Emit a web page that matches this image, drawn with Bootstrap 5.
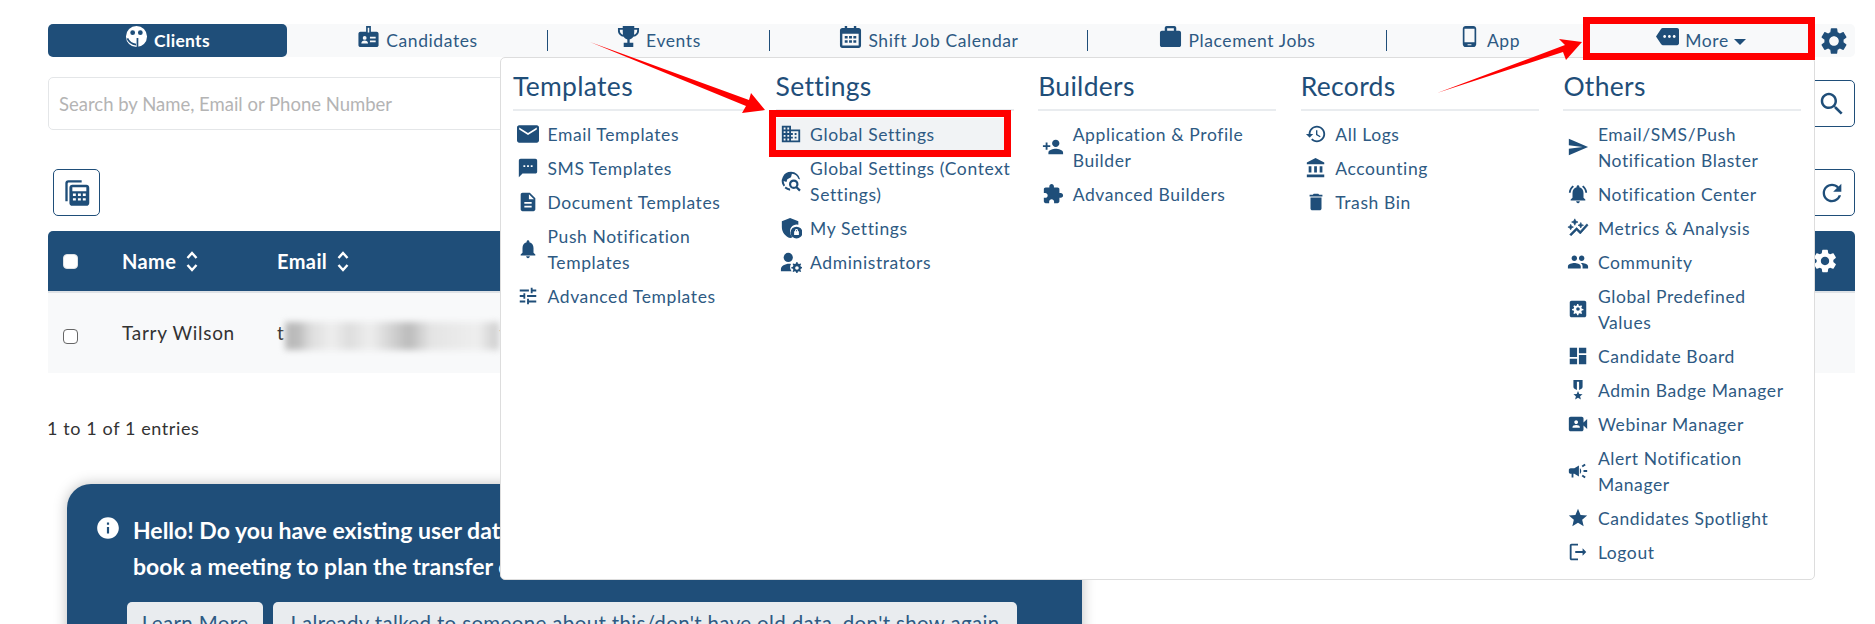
<!DOCTYPE html>
<html lang="en">
<head>
  <meta charset="UTF-8" />
  <meta name="viewport" content="width=device-width, initial-scale=1" />
  <title>Clients</title>
  <link href="https://cdn.jsdelivr.net/npm/bootstrap@5.3.3/dist/css/bootstrap.min.css" rel="stylesheet" />
  <style>
    html, body { height: 624px; overflow: hidden; }
    body {
      font-family: "Lato", "Noto Sans", sans-serif;
      font-size: 17.5px;
      letter-spacing: .6px;
      color: #2e5a83;
      background: #fff;
    }
    .page-wrap { position: relative; padding: 24px 20px 0 48px; }
    .ico { width: 1em; height: 1em; fill: currentColor; flex: none; }

    /* top tabs */
    .top-tabs { background: #f8f9fa; border-radius: 5px; height: 33px; }
    .tab-link { height: 33px; padding-top: 2px; color: #2e5a83; text-decoration: none; position: relative; gap: 6px; }
    .tab-link .ico { font-size: 23px; margin-top: -10px; color: #1f4e79; }
    .tab-link.is-on { background: #1f4e79; color: #fff; font-weight: 700; border-radius: 5px; letter-spacing: .3px; }
    .tab-link.is-on .ico { color: #fff; }
    .tab-sep::after { content: ""; position: absolute; right: 0; top: 6px; bottom: 6px; width: 1px; background: #1f4e79; }
    .w-clients { width: 239px; }
    .w-cand { width: 261px; }
    .w-events { width: 222px; }
    .w-shift { width: 318px; }
    .w-place { width: 299px; }
    .w-app { width: 204px; }
    .w-more { width: 220px; }
    .tab-gear { font-size: 32px; margin-left: 7px; margin-top: 0; color: #1f4e79; }
    .caret-down { width: 0; height: 0; border-left: 6px solid transparent; border-right: 6px solid transparent; border-top: 6px solid #1f4e79; margin-left: -1px; }

    /* search */
    .search-line { margin-top: 20px; height: 53px; }
    .search-input { height: 53px; border: 1px solid #e4e6e8; border-radius: 5px; padding-left: 10px; font-size: 18.5px; flex: 1; }
    .search-input::placeholder { color: #b4b4b4; }
    .square-btn { width: 47px; height: 47px; border: 1px solid #1f4e79; border-radius: 5px; color: #1f4e79; background: #fff; padding: 0; font-size: 30px; }
    .square-btn.is-small { font-size: 28px; }

    .tool-line { margin-top: 39px; padding: 0 0 0 5px; height: 47px; }

    /* clients table */
    .client-table { margin-top: 15px; }
    .head-row { height: 60px; background: #1f4e79; color: #fff; border-radius: 5px 5px 0 0; font-weight: 700; font-size: 20px; letter-spacing: .4px; }
    .body-row { height: 82px; border-top: 2px solid #dee2e6; background: #f8f9fa; color: #333; font-size: 19px; letter-spacing: .7px; }
    .cell-check { width: 74px; padding-left: 15px; }
    .cell-check input { width: 15px; height: 15px; display: block; }
    .body-row .cell-check input { border-color: #666; margin-top: 6px !important; }
    .cell-name { width: 155px; }
    .sort-ico { width: 12px; height: 23px; fill: none; stroke: #fff; stroke-width: 2.4; margin-left: 10px; }
    .head-gear { font-size: 28px; margin-left: auto; margin-right: 16px; }
    .blur-mail { width: 214px; height: 28px; margin: 6px 1px 0 0; background: linear-gradient(90deg, #bbb 0 6%, #ddd 12%, #eee 22%, #ddd 30%, #eee 40%, #bbb 58%, #e4e4e4 68%, #eee 90%, #ccc 100%); filter: blur(3px); }
    .entries-text { margin-top: 43px; color: #333; font-size: 18px; margin-left: -1px; line-height: 24px; }

    /* blue notice */
    .notice-box { margin: 44px 0 0 19px; width: 1015px; height: 200px; background: #1f4e79; color: #fff; border-radius: 24px; padding: 28px 40px; box-shadow: 0 0 14px rgba(0,0,0,.25); font-weight: 700; font-size: 23px; line-height: 36px; letter-spacing: 0; }
    .notice-text { gap: 12px; white-space: nowrap; }
    .notice-text .ico { font-size: 26px; margin: 3px 0 0 -12px; }
    .notice-actions { margin-top: 18px; margin-left: 20px; gap: 10px; }
    .notice-btn { background: #e9ecef; color: #2e5a83; border: 0; border-radius: 5px; font-size: 20.5px; height: 42px; padding: 0; white-space: nowrap; font-weight: 400; letter-spacing: .35px; }
    .w-learn { width: 136px; }
    .w-dismiss { width: 744px; }

    /* more menu */
    .more-menu { display: block; position: absolute; left: 500px; top: 57px; width: 1315px; height: 523px; padding: 0; margin: 0; border: 1px solid #ddd; border-radius: 5px; background: #fff; font-size: 17.5px; color: #2e5a83; }
    .menu-cols { margin: 0; padding: 0; }
    .menu-col { width: 262.6px; padding: 0 12.6px 0 12px; flex: none; }
    .menu-head { font-size: 26.5px; font-weight: 400; line-height: 30px; margin: 13px 0 0; height: 40px; border-bottom: 2px solid #e9ecef; letter-spacing: .3px; color: #1f4e79; }
    .menu-list { margin-top: 7px; }
    .menu-item { color: #2e5a83; text-decoration: none; padding: 4px 0 4px 4px; line-height: 26px; gap: 8.5px; }
    .menu-item .ico { font-size: 22px; margin-top: -3px; color: #1f4e79; }
    .menu-item.is-hover { background: #f1f3f5; margin: 0 8px 0 0; }

    /* red callouts */
    .mark-box { position: absolute; z-index: 1010; border: 7px solid #f00; pointer-events: none; }
    .mark-settings { left: 769px; top: 110px; width: 242px; height: 47px; }
    .mark-more { left: 1583px; top: 17px; width: 232px; height: 43px; }
    .mark-arrows { position: absolute; z-index: 1011; left: 0; top: 0; width: 1875px; height: 624px; pointer-events: none; }
  </style>
</head>
<body>

<svg width="0" height="0" class="position-absolute">
  <symbol id="i-clients" viewBox="0 0 24 24"><path fill-rule="evenodd" d="M12 1a11 11 0 1 0 0 22 11 11 0 0 0 0-22zM8 5.500a2.500 2.500 0 1 1 0 5 2.500 2.500 0 0 1 0-5zm8 0a2.500 2.500 0 1 1 0 5 2.500 2.500 0 0 1 0-5z"/><path fill="none" stroke="#1f4e79" stroke-width="1.800" d="M2.500 14c1.500 3.500 4.500 6 9 6.500M13 13.500V23"/></symbol>
  <symbol id="i-badge" viewBox="0 0 24 24"><path fill-rule="evenodd" d="M9.500 1h5v6h6c1 0 2 .9 2 2v12c0 1-1 2-2 2h-17c-1 0-2-1-2-2V9c0-1.100 1-2 2-2h6V1zm1.700 1.800v5h1.600v-5h-1.600zM8 11.500a2 2 0 1 0 0 4 2 2 0 0 0 0-4zm-3.500 7.800h7c0-1.800-1.500-3-3.500-3s-3.500 1.200-3.500 3zm9-7v1.800h6v-1.800h-6zm0 4v1.800h6v-1.800h-6z"/></symbol>
  <symbol id="i-trophy" viewBox="0 0 24 24"><path fill-rule="evenodd" d="M6 1h12v2h5v3c0 3.400-2.700 6-6 6.200-.9 1.500-2.300 2.500-3.800 2.800v3.500H17V23H7v-4.500h3.800V15c-1.500-.3-2.900-1.300-3.800-2.800C3.700 12 1 9.400 1 6V3h5V1zM3 5v1c0 2.200 1.500 3.700 3.300 4.100C6.100 9 6 7.500 6 5H3zm15 0c0 2.500-.1 4-.3 5.100C19.500 9.700 21 8.200 21 6V5h-3z"/></symbol>
  <symbol id="i-calendar" viewBox="0 0 24 24"><path fill-rule="evenodd" d="M6 1h2.500v2h7V1H18v2h2.500C22 3 23 4 23 5.500v16c0 1.400-1 2.500-2.500 2.500h-17C2 24 1 22.900 1 21.500v-16C1 4 2 3 3.500 3H6V1zM3.500 9v12.500h17V9h-17zM6 11.500h3v2.500H6v-2.500zm4.500 0h3v2.500h-3v-2.500zm4.500 0h3v2.500h-3v-2.500zM6 16h3v2.500H6V16zm4.500 0h3v2.500h-3V16zm4.500 0h3v2.500h-3V16z"/></symbol>
  <symbol id="i-case" viewBox="0 0 24 24"><path fill-rule="evenodd" d="M8 1h8c1 0 2 1 2 2v3h3c1 0 2 1 2 2v13c0 1-1 2-2 2H3c-1 0-2-1-2-2V8c0-1 1-2 2-2h3V3c0-1 1-2 2-2zm.5 2.500V6h7V3.500h-7z"/></symbol>
  <symbol id="i-phone" viewBox="0 0 24 24"><path d="M16 1H8C6.340 1 5 2.340 5 4v16c0 1.660 1.340 3 3 3h8c1.660 0 3-1.340 3-3V4c0-1.660-1.340-3-3-3zm-2 20h-4v-1h4v1zm3.250-3H6.750V4h10.500v14z"/></symbol>
  <symbol id="i-more" viewBox="0 0 24 24"><path d="M22 3H7c-.69 0-1.230.35-1.590.88L0 12l5.410 8.110c.36.53.9.89 1.590.89h15c1.100 0 2-.9 2-2V5c0-1.100-.9-2-2-2zM9 13.500c-.83 0-1.500-.67-1.500-1.500s.67-1.500 1.500-1.500 1.500.67 1.500 1.500-.67 1.500-1.500 1.500zm5 0c-.83 0-1.500-.67-1.500-1.500s.67-1.500 1.500-1.500 1.500.67 1.500 1.500-.67 1.500-1.500 1.500zm5 0c-.83 0-1.500-.67-1.500-1.500s.67-1.500 1.500-1.500 1.500.67 1.500 1.500-.67 1.500-1.500 1.500z"/></symbol>
  <symbol id="i-gear" viewBox="0 0 24 24"><path d="M19.140 12.940c.04-.3.06-.61.06-.94 0-.32-.02-.64-.07-.94l2.030-1.580c.18-.14.23-.41.12-.61l-1.920-3.320c-.12-.22-.37-.29-.59-.22l-2.390.96c-.5-.38-1.030-.7-1.620-.94l-.36-2.540c-.04-.24-.24-.41-.48-.41h-3.840c-.24 0-.43.17-.47.41l-.36 2.540c-.59.24-1.130.57-1.620.94l-2.390-.96c-.22-.08-.47 0-.59.22L2.740 8.870c-.12.21-.08.47.12.61l2.030 1.580c-.05.3-.09.63-.09.94s.02.64.07.94l-2.030 1.580c-.18.14-.23.41-.12.61l1.920 3.320c.12.22.37.29.59.22l2.390-.96c.5.38 1.030.7 1.620.94l.36 2.540c.05.24.24.41.48.41h3.840c.24 0 .44-.17.47-.41l.36-2.540c.59-.24 1.130-.56 1.620-.94l2.390.96c.22.08.47 0 .59-.22l1.920-3.320c.12-.22.07-.47-.12-.61l-2.010-1.580zM12 15.600c-1.980 0-3.600-1.620-3.600-3.600s1.620-3.600 3.600-3.600 3.600 1.620 3.600 3.600-1.620 3.600-3.600 3.600z"/></symbol>
  <symbol id="i-search" viewBox="0 0 24 24"><path d="M15.500 14h-.79l-.28-.27C15.410 12.590 16 11.110 16 9.500 16 5.910 13.090 3 9.500 3S3 5.910 3 9.500 5.910 16 9.500 16c1.610 0 3.090-.59 4.230-1.570l.27.28v.79l5 4.990L20.490 19l-4.990-5zm-6 0C7.010 14 5 11.990 5 9.500S7.010 5 9.500 5 14 7.010 14 9.500 11.990 14 9.500 14z"/></symbol>
  <symbol id="i-refresh" viewBox="0 0 24 24"><path d="M17.650 6.350C16.200 4.900 14.210 4 12 4c-4.420 0-7.990 3.580-7.990 8s3.570 8 7.990 8c3.730 0 6.840-2.550 7.730-6h-2.080c-.82 2.330-3.040 4-5.650 4-3.310 0-6-2.690-6-6s2.690-6 6-6c1.660 0 3.140.69 4.220 1.780L13 11h7V4l-2.350 2.350z"/></symbol>
  <symbol id="i-calc" viewBox="0 0 24 24"><path fill-rule="evenodd" d="M4.500 1H16v2H5c-.5 0-1 .5-1 1v15H2V3.500C2 2 3 1 4.500 1zM8 5h12c1.500 0 2.500 1 2.500 2.500v13c0 1.500-1 2.500-2.500 2.500H8c-1.500 0-2.500-1-2.500-2.500v-13C5.500 6 6.500 5 8 5zm0 2v3.500h12V7H8zm.5 5.500v2H11v-2H8.500zm4.300 0v2h2.500v-2h-2.500zm4.200 0v2h2.500v-2H17zm-8.500 4v2H11v-2H8.500zm4.300 0v2h2.500v-2h-2.500zm4.200 0v2h2.500v-2H17z"/></symbol>
  <symbol id="i-mail" viewBox="2 4 20 16"><path d="M20 4H4c-1.100 0-1.990.9-1.990 2L2 18c0 1.100.9 2 2 2h16c1.100 0 2-.9 2-2V6c0-1.100-.9-2-2-2zm0 4l-8 5-8-5V6l8 5 8-5v2z"/></symbol>
  <symbol id="i-sms" viewBox="0 0 24 24"><path d="M20 2H4c-1.100 0-1.990.9-1.990 2L2 22l4-4h14c1.100 0 2-.9 2-2V4c0-1.100-.9-2-2-2zM9 11H7V9h2v2zm4 0h-2V9h2v2zm4 0h-2V9h2v2z"/></symbol>
  <symbol id="i-doc" viewBox="0 0 24 24"><path d="M14 2H6c-1.100 0-1.990.9-1.990 2L4 20c0 1.100.89 2 1.990 2H18c1.100 0 2-.9 2-2V8l-6-6zm2 16H8v-2h8v2zm0-4H8v-2h8v2zm-3-5V3.500L18.500 9H13z"/></symbol>
  <symbol id="i-bell" viewBox="0 0 24 24"><path d="M12 22c1.100 0 2-.9 2-2h-4c0 1.100.89 2 2 2zm6-6v-5c0-3.070-1.640-5.640-4.500-6.320V4c0-.83-.67-1.500-1.500-1.500s-1.500.67-1.500 1.500v.68C7.630 5.360 6 7.920 6 11v5l-2 2v1h16v-1l-2-2z"/></symbol>
  <symbol id="i-tune" viewBox="0 0 24 24"><path d="M3 17v2h6v-2H3zM3 5v2h10V5H3zm10 16v-2h8v-2h-8v-2h-2v6h2zM7 9v2H3v2h4v2h2V9H7zm14 4v-2H11v2h10zm-6-4h2V7h4V5h-4V3h-2v6z"/></symbol>
  <symbol id="i-domain" viewBox="0 0 24 24"><path d="M12 7V3H2v18h20V7H12zM6 19H4v-2h2v2zm0-4H4v-2h2v2zm0-4H4V9h2v2zm0-4H4V5h2v2zm4 12H8v-2h2v2zm0-4H8v-2h2v2zm0-4H8V9h2v2zm0-4H8V5h2v2zm10 12h-8v-2h2v-2h-2v-2h2v-2h-2V9h8v10zm-2-8h-2v2h2v-2zm0 4h-2v2h2v-2z"/></symbol>
  <symbol id="i-globe" viewBox="0 0 24 24"><path fill-rule="evenodd" d="M12 2a10 10 0 0 0-8 16l1.500-1.500A8 8 0 0 1 4 12l3 1 1-3 4-2 1-4a8 8 0 0 1 7 5.500l2 .8A10 10 0 0 0 12 2zM5 20a10 10 0 0 0 6 2.500v-2.200c-2-.3-3.500-1.100-4.600-2.200L5 20z"/><path fill="none" stroke="currentColor" stroke-width="2.400" d="M19 15.500a4 4 0 1 1-8 0 4 4 0 0 1 8 0zm-1.200 3l4 4"/></symbol>
  <symbol id="i-shield" viewBox="0 0 24 24"><path fill-rule="evenodd" d="M11 1l9 3.500v4a7 7 0 0 0-9 7.500c0 2.400 1 4.500 2.700 6-.8.500-1.700.8-2.700 1-5-1.300-9-6.400-9-12V4.500L11 1zm7 9.500a6.500 6.500 0 1 1 0 13 6.500 6.500 0 0 1 0-13zm0 2.500a1.600 1.600 0 0 0-1.600 1.600v.9h-1v4h5.200v-4h-1v-.9A1.600 1.600 0 0 0 18 13zm0 1.200c.3 0 .5.200.5.500v.8h-1v-.8c0-.3.200-.5.500-.5z"/></symbol>
  <symbol id="i-admin" viewBox="0 0 24 24"><circle cx="9" cy="7" r="5"/><path d="M1 22v-2c0-3.500 4.500-6 9-6 .7 0 1.300 0 2 .2-.6 1-1 2.200-1 3.300 0 1.700.6 3.300 1.700 4.500H1z"/><path fill-rule="evenodd" d="M18 12l1 0 .5 1.700 1.300.6 1.600-.8.7.8-.9 1.600.5 1.300 1.800.5v1.100l-1.800.5-.5 1.300.9 1.600-.8.8-1.600-.9-1.300.6-.4 1.700h-1.100l-.5-1.700-1.300-.6-1.600.9-.8-.8.900-1.600-.6-1.300-1.700-.5v-1.100l1.700-.5.6-1.300-.9-1.600.8-.8 1.600.8 1.300-.6.500-1.700zm.5 4.500a2 2 0 1 0 0 4 2 2 0 0 0 0-4z"/></symbol>
  <symbol id="i-person-add" viewBox="0 0 24 24"><path d="M15 12c2.210 0 4-1.790 4-4s-1.790-4-4-4-4 1.790-4 4 1.790 4 4 4zm-9-2V7H4v3H1v2h3v3h2v-3h3v-2H6zm9 4c-2.670 0-8 1.340-8 4v2h16v-2c0-2.660-5.330-4-8-4z"/></symbol>
  <symbol id="i-puzzle" viewBox="0 0 24 24"><path d="M20.500 11H19V7c0-1.100-.9-2-2-2h-4V3.500C13 2.120 11.880 1 10.500 1S8 2.120 8 3.500V5H4c-1.100 0-1.990.9-1.990 2v3.800H3.500c1.490 0 2.700 1.210 2.700 2.700s-1.210 2.700-2.700 2.700H2V20c0 1.100.9 2 2 2h3.800v-1.500c0-1.490 1.210-2.700 2.700-2.700 1.490 0 2.700 1.210 2.700 2.700V22H17c1.100 0 2-.9 2-2v-4h1.500c1.380 0 2.500-1.120 2.500-2.500S21.880 11 20.500 11z"/></symbol>
  <symbol id="i-history" viewBox="0 0 24 24"><path d="M13 3c-4.970 0-9 4.030-9 9H1l3.890 3.890.07.14L9 12H6c0-3.870 3.130-7 7-7s7 3.130 7 7-3.130 7-7 7c-1.930 0-3.680-.79-4.940-2.060l-1.420 1.420C8.270 19.990 10.510 21 13 21c4.970 0 9-4.030 9-9s-4.030-9-9-9zm-1 5v5l4.280 2.540.72-1.210-3.500-2.080V8H12z"/></symbol>
  <symbol id="i-bank" viewBox="0 0 24 24"><path d="M4 10v7h3v-7H4zm6 0v7h3v-7h-3zM2 22h19v-3H2v3zm14-12v7h3v-7h-3zm-4.500-9L2 6v2h19V6l-9.500-5z"/></symbol>
  <symbol id="i-trash" viewBox="0 0 24 24"><path d="M6 19c0 1.100.9 2 2 2h8c1.100 0 2-.9 2-2V7H6v12zM19 4h-3.500l-1-1h-5l-1 1H5v2h14V4z"/></symbol>
  <symbol id="i-send" viewBox="0 0 24 24"><path d="M2.010 21L23 12 2.010 3 2 10l15 2-15 2z"/></symbol>
  <symbol id="i-bell-on" viewBox="0 0 24 24"><path d="M7.580 4.080L6.150 2.650C3.750 4.480 2.170 7.300 2.030 10.500h2c.15-2.650 1.510-4.970 3.550-6.420zm12.390 6.420h2c-.15-3.200-1.730-6.020-4.120-7.850l-1.420 1.430c2.020 1.450 3.390 3.770 3.540 6.420zM18 11c0-3.070-1.640-5.640-4.500-6.320V4c0-.83-.67-1.500-1.500-1.500s-1.500.67-1.500 1.500v.68C7.630 5.360 6 7.920 6 11v5l-2 2v1h16v-1l-2-2v-5zm-6 11c.14 0 .27-.01.4-.04.65-.14 1.180-.58 1.440-1.180.1-.24.15-.5.15-.78h-4c.01 1.100.9 2 2.010 2z"/></symbol>
  <symbol id="i-metrics" viewBox="0 0 24 24"><path stroke="currentColor" stroke-width=".7" d="M14.060 9.940L12 9l2.060-.94L15 6l.94 2.060L18 9l-2.060.94L15 12l-.94-2.060zM4 14l.94-2.060L7 11l-2.060-.94L4 8l-.94 2.060L1 11l2.060.94L4 14zm4.500-5l1.090-2.410L12 5.500 9.590 4.410 8.500 2 7.410 4.410 5 5.500l2.410 1.090L8.500 9zm-4 11.500l6-6.010 4 4L23 8.930l-1.410-1.410-7.090 7.970-4-4L3 19l1.500 1.500z"/></symbol>
  <symbol id="i-people" viewBox="0 0 24 24"><path d="M16 11c1.660 0 2.990-1.340 2.990-3S17.660 5 16 5c-1.660 0-3 1.340-3 3s1.340 3 3 3zm-8 0c1.660 0 2.990-1.340 2.990-3S9.660 5 8 5C6.340 5 5 6.340 5 8s1.340 3 3 3zm0 2c-2.330 0-7 1.170-7 3.500V19h14v-2.500c0-2.330-4.670-3.500-7-3.500zm8 0c-.29 0-.62.02-.97.05 1.160.84 1.970 1.970 1.970 3.450V19h6v-2.500c0-2.330-4.670-3.500-7-3.500z"/></symbol>
  <symbol id="i-box-gear" viewBox="0 0 24 24"><path fill-rule="evenodd" d="M5 3h14c1.100 0 2 .9 2 2v14c0 1.100-.9 2-2 2H5c-1.100 0-2-.9-2-2V5c0-1.100.9-2 2-2zm6 3.500l-.3 1.700-1.300.6-1.500-.9-1 1 .9 1.500-.6 1.300-1.700.3v1.400l1.700.3.6 1.300-.9 1.500 1 1 1.500-.9 1.300.6.3 1.700h1.400l.3-1.700 1.300-.6 1.500.9 1-1-.9-1.500.6-1.300 1.700-.3v-1.400l-1.700-.3-.6-1.300.9-1.500-1-1-1.500.9-1.300-.6-.3-1.700H11zm1 3.500a2 2 0 1 1 0 4 2 2 0 0 1 0-4z"/></symbol>
  <symbol id="i-board" viewBox="0 0 24 24"><path d="M3 13h8V3H3v10zm0 8h8v-6H3v6zm10 0h8V11h-8v10zm0-18v6h8V3h-8z"/></symbol>
  <symbol id="i-medal" viewBox="0 0 24 24"><path d="M7 1h10v7.500c0 1-.4 1.700-1.200 2.200L13.200 12v-9h-2.400v9l-2.600-1.300C7.400 10.200 7 9.500 7 8.500V1z"/><path d="M12 13l1.400 3.300 3.600.3-2.700 2.300.8 3.500-3.100-1.900-3.100 1.900.8-3.500L7 16.600l3.600-.3z"/></symbol>
  <symbol id="i-video" viewBox="0 0 24 24"><path d="M18 10.480V6c0-1.100-.9-2-2-2H4c-1.100 0-2 .9-2 2v12c0 1.100.9 2 2 2h12c1.100 0 2-.9 2-2v-4.480l4 3.980v-11l-4 3.980zM10 8c1.100 0 2 .9 2 2s-.9 2-2 2-2-.9-2-2 .9-2 2-2zm4 8H6v-.57c0-.81.48-1.530 1.220-1.850.85-.37 1.790-.58 2.780-.58.99 0 1.930.21 2.780.58.74.32 1.220 1.040 1.220 1.850V16z"/></symbol>
  <symbol id="i-campaign" viewBox="0 0 24 24"><path d="M18 11v2h4v-2h-4zm-2 6.610c.96.71 2.210 1.650 3.200 2.390.4-.53.8-1.070 1.200-1.600-.99-.74-2.240-1.680-3.200-2.400-.4.54-.8 1.080-1.200 1.610zM20.400 5.600c-.4-.53-.8-1.070-1.200-1.600-.99.74-2.240 1.680-3.200 2.400.4.53.8 1.070 1.200 1.600.96-.72 2.210-1.650 3.200-2.400zM4 9c-1.100 0-2 .9-2 2v2c0 1.100.9 2 2 2h1v4h2v-4h1l5 3V6L8 9H4zm11.500 3c0-1.330-.58-2.530-1.500-3.350v6.690c.92-.81 1.500-2.010 1.500-3.340z"/></symbol>
  <symbol id="i-star" viewBox="0 0 24 24"><path d="M12 17.270L18.180 21l-1.640-7.030L22 9.240l-7.190-.61L12 2 9.190 8.630 2 9.240l5.460 4.730L5.820 21z"/></symbol>
  <symbol id="i-logout" viewBox="0 0 24 24"><path d="M5 5h7V3H5c-1.100 0-2 .9-2 2v14c0 1.100.9 2 2 2h7v-2H5V5zm16 7l-4-4v3H9v2h8v3l4-4z"/></symbol>
  <symbol id="i-info" viewBox="0 0 24 24"><path d="M12 2C6.480 2 2 6.480 2 12s4.480 10 10 10 10-4.480 10-10S17.520 2 12 2zm1 15h-2v-6h2v6zm0-8h-2V7h2v2z"/></symbol>
</svg>

<div class="page-wrap">

  <!-- top tabs -->
  <div class="top-tabs d-flex align-items-center">
    <a class="tab-link is-on w-clients d-flex align-items-center justify-content-center" href="#"><svg class="ico"><use href="#i-clients"/></svg>Clients</a>
    <a class="tab-link tab-sep w-cand d-flex align-items-center justify-content-center" href="#"><svg class="ico"><use href="#i-badge"/></svg>Candidates</a>
    <a class="tab-link tab-sep w-events d-flex align-items-center justify-content-center" href="#"><svg class="ico"><use href="#i-trophy"/></svg>Events</a>
    <a class="tab-link tab-sep w-shift d-flex align-items-center justify-content-center" href="#"><svg class="ico"><use href="#i-calendar"/></svg>Shift Job Calendar</a>
    <a class="tab-link tab-sep w-place d-flex align-items-center justify-content-center" href="#"><svg class="ico"><use href="#i-case"/></svg>Placement Jobs</a>
    <a class="tab-link w-app d-flex align-items-center justify-content-center" href="#"><svg class="ico"><use href="#i-phone"/></svg>App</a>
    <a class="tab-link w-more d-flex align-items-center justify-content-center" href="#"><svg class="ico"><use href="#i-more"/></svg>More<span class="caret-down"></span></a>
    <svg class="ico tab-gear"><use href="#i-gear"/></svg>
  </div>

  <!-- search -->
  <div class="search-line d-flex align-items-center">
    <input class="search-input form-control" type="text" placeholder="Search by Name, Email or Phone Number" />
    <button class="square-btn btn d-flex align-items-center justify-content-center" type="button"><svg class="ico"><use href="#i-search"/></svg></button>
  </div>

  <!-- tools -->
  <div class="tool-line d-flex justify-content-between">
    <button class="square-btn btn is-small d-flex align-items-center justify-content-center" type="button"><svg class="ico"><use href="#i-calc"/></svg></button>
    <button class="square-btn btn is-small d-flex align-items-center justify-content-center" type="button"><svg class="ico"><use href="#i-refresh"/></svg></button>
  </div>

  <!-- table -->
  <div class="client-table">
    <div class="head-row d-flex align-items-center">
      <div class="cell-check"><input class="form-check-input m-0 rounded-1" type="checkbox" /></div>
      <div class="cell-name d-flex align-items-center">Name <svg class="sort-ico" viewBox="0 0 12 23"><path d="M1.500 8 6 3l4.500 5M1.500 15 6 20l4.500-5"/></svg></div>
      <div class="d-flex align-items-center">Email <svg class="sort-ico" viewBox="0 0 12 23"><path d="M1.500 8 6 3l4.500 5M1.500 15 6 20l4.500-5"/></svg></div>
      <svg class="ico head-gear"><use href="#i-gear"/></svg>
    </div>
    <div class="body-row d-flex align-items-center">
      <div class="cell-check"><input class="form-check-input m-0 rounded-1" type="checkbox" /></div>
      <div class="cell-name">Tarry Wilson</div>
      <span>t</span><div class="blur-mail"></div><span>y</span>
    </div>
  </div>

  <div class="entries-text">1 to 1 of 1 entries</div>

  <!-- notice -->
  <div class="notice-box">
    <div class="notice-text d-flex">
      <svg class="ico"><use href="#i-info"/></svg>
      <div>Hello! Do you have existing user data you would like to bring over? Let us know so we can<br />book a meeting to plan the transfer of your data.</div>
    </div>
    <div class="notice-actions d-flex">
      <button class="notice-btn w-learn" type="button">Learn More</button>
      <button class="notice-btn w-dismiss" type="button">I already talked to someone about this/don't have old data, don't show again</button>
    </div>
  </div>

  <!-- more menu -->
  <div class="more-menu dropdown-menu show">
    <div class="menu-cols d-flex">

      <div class="menu-col">
        <h5 class="menu-head">Templates</h5>
        <div class="menu-list d-flex flex-column">
          <a class="menu-item d-flex align-items-center" href="#"><svg class="ico"><use href="#i-mail"/></svg><span>Email Templates</span></a>
          <a class="menu-item d-flex align-items-center" href="#"><svg class="ico"><use href="#i-sms"/></svg><span>SMS Templates</span></a>
          <a class="menu-item d-flex align-items-center" href="#"><svg class="ico"><use href="#i-doc"/></svg><span>Document Templates</span></a>
          <a class="menu-item d-flex align-items-center" href="#"><svg class="ico"><use href="#i-bell"/></svg><span>Push Notification<br />Templates</span></a>
          <a class="menu-item d-flex align-items-center" href="#"><svg class="ico"><use href="#i-tune"/></svg><span>Advanced Templates</span></a>
        </div>
      </div>

      <div class="menu-col">
        <h5 class="menu-head">Settings</h5>
        <div class="menu-list d-flex flex-column">
          <a class="menu-item is-hover d-flex align-items-center" href="#"><svg class="ico"><use href="#i-domain"/></svg><span>Global Settings</span></a>
          <a class="menu-item d-flex align-items-center" href="#"><svg class="ico"><use href="#i-globe"/></svg><span>Global Settings (Context<br />Settings)</span></a>
          <a class="menu-item d-flex align-items-center" href="#"><svg class="ico"><use href="#i-shield"/></svg><span>My Settings</span></a>
          <a class="menu-item d-flex align-items-center" href="#"><svg class="ico"><use href="#i-admin"/></svg><span>Administrators</span></a>
        </div>
      </div>

      <div class="menu-col">
        <h5 class="menu-head">Builders</h5>
        <div class="menu-list d-flex flex-column">
          <a class="menu-item d-flex align-items-center" href="#"><svg class="ico"><use href="#i-person-add"/></svg><span>Application &amp; Profile<br />Builder</span></a>
          <a class="menu-item d-flex align-items-center" href="#"><svg class="ico"><use href="#i-puzzle"/></svg><span>Advanced Builders</span></a>
        </div>
      </div>

      <div class="menu-col">
        <h5 class="menu-head">Records</h5>
        <div class="menu-list d-flex flex-column">
          <a class="menu-item d-flex align-items-center" href="#"><svg class="ico"><use href="#i-history"/></svg><span>All Logs</span></a>
          <a class="menu-item d-flex align-items-center" href="#"><svg class="ico"><use href="#i-bank"/></svg><span>Accounting</span></a>
          <a class="menu-item d-flex align-items-center" href="#"><svg class="ico"><use href="#i-trash"/></svg><span>Trash Bin</span></a>
        </div>
      </div>

      <div class="menu-col">
        <h5 class="menu-head">Others</h5>
        <div class="menu-list d-flex flex-column">
          <a class="menu-item d-flex align-items-center" href="#"><svg class="ico"><use href="#i-send"/></svg><span>Email/SMS/Push<br />Notification Blaster</span></a>
          <a class="menu-item d-flex align-items-center" href="#"><svg class="ico"><use href="#i-bell-on"/></svg><span>Notification Center</span></a>
          <a class="menu-item d-flex align-items-center" href="#"><svg class="ico"><use href="#i-metrics"/></svg><span>Metrics &amp; Analysis</span></a>
          <a class="menu-item d-flex align-items-center" href="#"><svg class="ico"><use href="#i-people"/></svg><span>Community</span></a>
          <a class="menu-item d-flex align-items-center" href="#"><svg class="ico"><use href="#i-box-gear"/></svg><span>Global Predefined<br />Values</span></a>
          <a class="menu-item d-flex align-items-center" href="#"><svg class="ico"><use href="#i-board"/></svg><span>Candidate Board</span></a>
          <a class="menu-item d-flex align-items-center" href="#"><svg class="ico"><use href="#i-medal"/></svg><span>Admin Badge Manager</span></a>
          <a class="menu-item d-flex align-items-center" href="#"><svg class="ico"><use href="#i-video"/></svg><span>Webinar Manager</span></a>
          <a class="menu-item d-flex align-items-center" href="#"><svg class="ico"><use href="#i-campaign"/></svg><span>Alert Notification<br />Manager</span></a>
          <a class="menu-item d-flex align-items-center" href="#"><svg class="ico"><use href="#i-star"/></svg><span>Candidates Spotlight</span></a>
          <a class="menu-item d-flex align-items-center" href="#"><svg class="ico"><use href="#i-logout"/></svg><span>Logout</span></a>
        </div>
      </div>

    </div>
  </div>
</div>

<!-- red callouts on top of the page -->
<div class="mark-box mark-settings"></div>
<div class="mark-box mark-more"></div>
<svg class="mark-arrows" viewBox="0 0 1875 624">
  <polygon fill="#f00" points="590,42 749,100 751,93 765,110 742,113 746,106"/>
  <polygon fill="#f00" points="1437,93 1565,45 1559,39 1582,42 1566,60 1563,52"/>
</svg>

</body>
</html>
